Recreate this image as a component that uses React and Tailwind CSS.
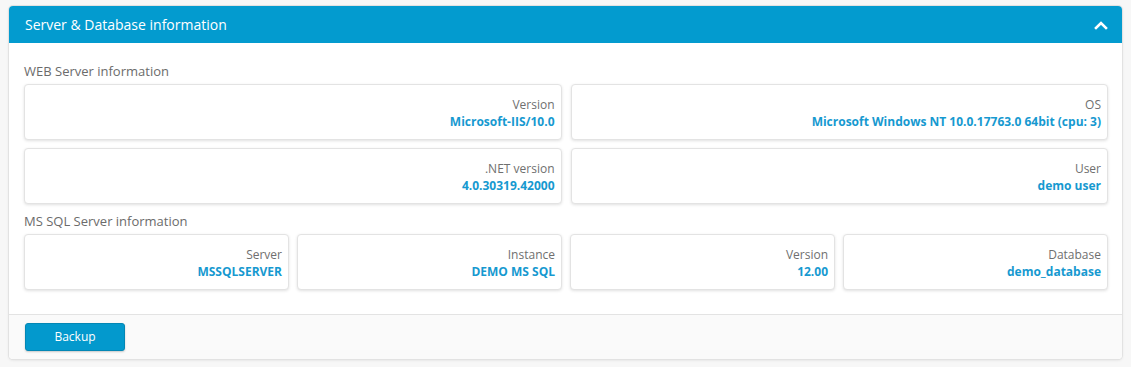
export default function App() {
  const Item = ({ label, value }) => (
    <div className="flex-1 h-[56px] rounded-[4px] border border-[#e3e3e3] bg-white shadow-[0_1px_3px_rgba(0,0,0,0.12)] flex flex-col items-end justify-center pr-[6px] pt-[3px]">
      <div className="text-[12px] leading-[16px] text-[#6f6f6f]">{label}</div>
      <div className="text-[12px] leading-[18px] font-bold text-[#1699d0]">{value}</div>
    </div>
  );
  return (
    <div className="w-[1131px] h-[367px] bg-[#f7f7f7] pt-[6px] px-[9px]" style={{ fontFamily: '"Open Sans", "Noto Sans", sans-serif' }}>
      <div className="bg-white rounded-[4px] shadow-[0_0_0_1px_#e2e2e2,0_1px_3px_rgba(0,0,0,0.12)] overflow-hidden">
        <div className="h-[37px] bg-[#039bcf] flex items-center justify-between pl-[16px] pr-[14px]">
          <span className="text-white text-[14px]">Server &amp; Database information</span>
          <svg width="14" height="10" viewBox="0 0 14 10">
            <path d="M2 8 L7 3 L12 8" stroke="white" strokeWidth="2.6" fill="none" strokeLinecap="square" />
          </svg>
        </div>
        <div className="pl-[15px] pr-[14px] pt-[19px] pb-[24px]">
          <div className="text-[13px] leading-[18px] text-[#6b6b6b] mb-[4px]">WEB Server information</div>
          <div className="flex flex-col gap-[8px]">
            <div className="flex gap-[9px]">
              <Item label="Version" value="Microsoft-IIS/10.0" />
              <Item label="OS" value="Microsoft Windows NT 10.0.17763.0 64bit (cpu: 3)" />
            </div>
            <div className="flex gap-[9px]">
              <Item label=".NET version" value="4.0.30319.42000" />
              <Item label="User" value="demo user" />
            </div>
          </div>
          <div className="text-[13px] leading-[18px] text-[#6b6b6b] mt-[8px] mb-[4px]">MS SQL Server information</div>
          <div className="flex gap-[8px]">
            <Item label="Server" value="MSSQLSERVER" />
            <Item label="Instance" value="DEMO MS SQL" />
            <Item label="Version" value="12.00" />
            <Item label="Database" value="demo_database" />
          </div>
        </div>
        <div className="border-t border-[#e3e3e3] bg-[#fafafa] h-[45px] pl-[16px] pt-[8px]">
          <button className="w-[100px] h-[28px] rounded-[3px] bg-[#0399cd] border border-[#0387b5] text-white text-[12px] shadow-[0_1px_2px_rgba(0,0,0,0.2)]">Backup</button>
        </div>
      </div>
    </div>
  );
}
